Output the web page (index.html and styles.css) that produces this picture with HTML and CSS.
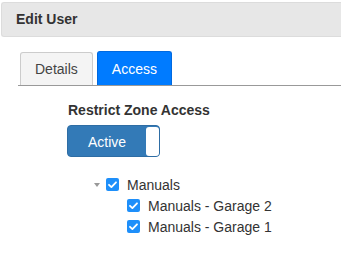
FILE: index.html
```html
<!DOCTYPE html>
<html>
<head>
<meta charset="utf-8">
<link rel="stylesheet" href="styles.css">
</head>
<body>
<div class="header">Edit User</div>
<div class="tabs">
  <div class="tab">Details</div>
  <div class="tab active">Access</div>
</div>
<div class="content">
  <div class="label">Restrict Zone Access</div>
  <div class="toggle">
    <span class="toggle-on">Active</span>
    <span class="knob"></span>
  </div>
  <div class="tree">
    <div class="row">
      <span class="caret"></span>
      <span class="check"><svg viewBox="0 0 13 13" width="13" height="13"><path d="M3 6.8 L5.4 9.1 L10 4.3" fill="none" stroke="#fff" stroke-width="1.8" stroke-linecap="round" stroke-linejoin="round"/></svg></span>
      <span class="text">Manuals</span>
    </div>
    <div class="row child">
      <span class="check"><svg viewBox="0 0 13 13" width="13" height="13"><path d="M3 6.8 L5.4 9.1 L10 4.3" fill="none" stroke="#fff" stroke-width="1.8" stroke-linecap="round" stroke-linejoin="round"/></svg></span>
      <span class="text">Manuals - Garage 2</span>
    </div>
    <div class="row child">
      <span class="check"><svg viewBox="0 0 13 13" width="13" height="13"><path d="M3 6.8 L5.4 9.1 L10 4.3" fill="none" stroke="#fff" stroke-width="1.8" stroke-linecap="round" stroke-linejoin="round"/></svg></span>
      <span class="text">Manuals - Garage 1</span>
    </div>
  </div>
</div>
</body>
</html>
```
FILE: styles.css
```css
html, body {
  margin: 0;
  padding: 0;
  background: #fff;
  font-family: "Liberation Sans", Arial, sans-serif;
  font-size: 14px;
  color: #333;
  overflow: hidden;
}
.header {
  margin: 2px 0 0 1px;
  height: 33px;
  line-height: 33px;
  padding-left: 14px;
  background: #e7e7e7;
  border: 1px solid #dcdcdc;
  border-right: none;
  border-radius: 3px 0 0 3px;
  font-weight: bold;
  color: #333;
}
.tabs {
  display: flex;
  gap: 4px;
  margin: 14px 0 0 18px;
  padding-left: 2px;
  border-bottom: 1px solid #999;
  height: 34px;
  align-items: flex-end;
}
.tab {
  height: 32px;
  line-height: 32px;
  padding: 0 14px;
  border: 1px solid #ccc;
  border-bottom: none;
  border-radius: 3px 3px 0 0;
  background: #f4f4f4;
  color: #444;
}
.tab.active {
  height: 33px;
  line-height: 34px;
  background: #007bff;
  border-color: #0069e0;
  color: #fff;
}
.content {
  padding: 16px 0 0 67px;
}
.label {
  font-weight: bold;
  line-height: 16px;
  padding-left: 1px;
}
.toggle {
  margin-top: 7px;
  width: 93px;
  height: 32px;
  box-sizing: border-box;
  display: flex;
  align-items: stretch;
  background: #337ab7;
  border: 1px solid #2e6da4;
  border-radius: 4px;
  padding: 1px 0 0 0;
}
.toggle-on {
  flex: 1;
  display: flex;
  align-items: center;
  justify-content: center;
  color: #fff;
  font-size: 14px;
}
.knob {
  width: 13px;
  background: #fff;
  border-radius: 3px;
}
.tree {
  margin-top: 17px;
  padding-left: 27px;
}
.row {
  display: flex;
  align-items: center;
  height: 21px;
}
.row.child {
  padding-left: 33px;
}
.caret {
  width: 0;
  height: 0;
  border-left: 3.5px solid transparent;
  border-right: 3.5px solid transparent;
  border-top: 4px solid #999;
  margin-right: 6px;
  margin-top: 1px;
}
.check {
  width: 13px;
  height: 13px;
  background: #1e8ffa;
  border-radius: 2px;
  display: flex;
  margin-right: 8px;
}
.text {
  color: #333;
}
```
